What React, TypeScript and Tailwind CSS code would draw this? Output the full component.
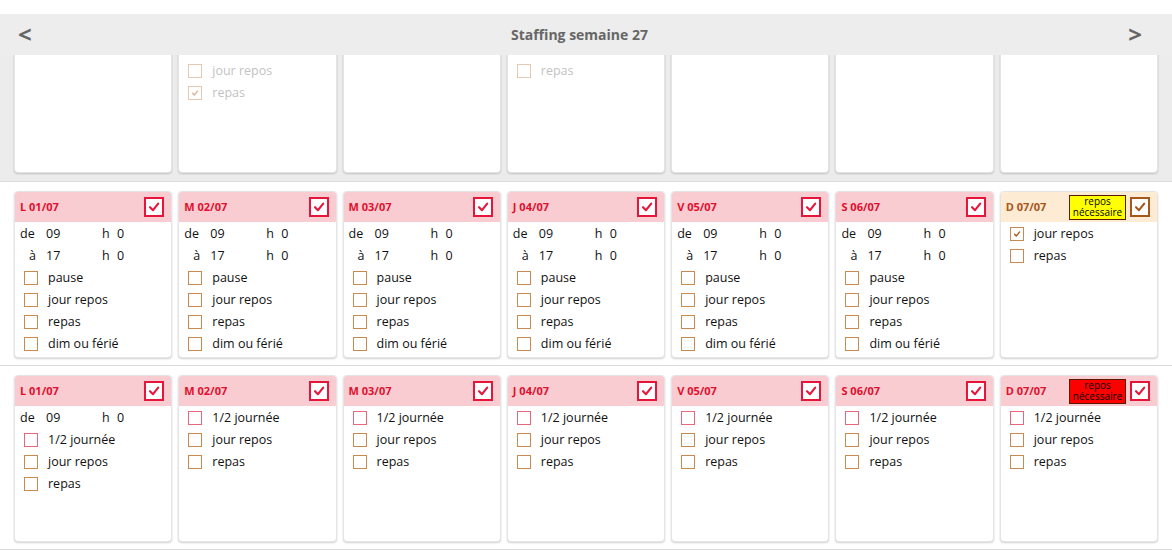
import React from "react";

type Item =
  | { kind: "time"; label: string; value: string; indent?: boolean }
  | { kind: "check"; label: string; checked?: boolean; pink?: boolean }
  | { kind: "spacer" };

type Card = {
  day: string;
  sunday?: "yellow" | "red";
  peach?: boolean;
  items: Item[];
};

const days = ["L 01/07", "M 02/07", "M 03/07", "J 04/07", "V 05/07", "S 06/07", "D 07/07"];

const timed: Item[] = [
  { kind: "time", label: "de", value: "09" },
  { kind: "time", label: "à", value: "17", indent: true },
  { kind: "check", label: "pause" },
  { kind: "check", label: "jour repos" },
  { kind: "check", label: "repas" },
  { kind: "check", label: "dim ou férié" },
];

const half: Item[] = [
  { kind: "check", label: "1/2 journée", pink: true },
  { kind: "check", label: "jour repos" },
  { kind: "check", label: "repas" },
];

const row1: Card[] = days.map((d, i) => ({
  day: d,
  items:
    i === 1
      ? [
          { kind: "spacer" },
          { kind: "check", label: "jour repos" },
          { kind: "check", label: "repas", checked: true },
        ]
      : i === 3
      ? [{ kind: "spacer" }, { kind: "check", label: "repas" }]
      : [],
}));

const row2: Card[] = days.map((d, i) =>
  i < 6
    ? { day: d, items: timed }
    : {
        day: d,
        sunday: "yellow",
        peach: true,
        items: [
          { kind: "check", label: "jour repos", checked: true },
          { kind: "check", label: "repas" },
        ],
      }
);

const row3: Card[] = days.map((d, i) =>
  i === 0
    ? { day: d, items: [{ kind: "time", label: "de", value: "09" }, ...half] }
    : i === 6
    ? { day: d, sunday: "red", items: half }
    : { day: d, items: half }
);

function BigCheck({ brown }: { brown?: boolean }) {
  const c = brown ? "#a8561b" : "#e5163a";
  return (
    <div
      className={`w-[20px] h-[20px] bg-white border-2 flex items-center justify-center ${
        brown ? "border-[#a8561b]" : "border-[#e5163a]"
      }`}
    >
      <svg width="14" height="14" viewBox="0 0 14 14">
        <path d="M3 7.2 L6 10.2 L11.2 3.6" fill="none" stroke={c} strokeWidth="2.1" strokeLinecap="round" strokeLinejoin="round" />
      </svg>
    </div>
  );
}

function SmallBox({ checked, pink }: { checked?: boolean; pink?: boolean }) {
  return (
    <div
      className={`w-[14px] h-[14px] bg-white border-[1.5px] flex items-center justify-center shrink-0 ${
        pink ? "border-[#e8677a]" : "border-[#c98a52]"
      }`}
    >
      {checked && (
        <svg width="10" height="10" viewBox="0 0 10 10">
          <path d="M2.6 5.3 L4.3 7 L7.6 2.9" fill="none" stroke="#a8561b" strokeWidth="1.3" strokeLinecap="round" strokeLinejoin="round" />
        </svg>
      )}
    </div>
  );
}

function DayCard({ card, faded }: { card: Card; faded?: boolean }) {
  return (
    <div className="h-[167px] bg-white rounded-[4px] border border-[#e4e4e4] shadow-[0_1px_2px_rgba(0,0,0,0.18)] overflow-hidden">
      <div
        className={`h-[30px] flex items-center justify-between pl-[5px] pr-[7px] ${
          card.peach ? "bg-[#fdebd3]" : "bg-[#f9ccd1]"
        }`}
      >
        <span
          className={`text-[11px] font-bold ${card.peach ? "text-[#a8561b]" : "text-[#e0102f]"}`}
        >
          {card.day}
        </span>
        <div className="flex items-center gap-[4px]">
          {card.sunday && (
            <div
              className={`w-[57px] h-[25px] border border-[#5a1a00] flex flex-col items-center justify-center text-[10px] leading-[11px] text-black ${
                card.sunday === "yellow" ? "bg-[#ffff00]" : "bg-[#ff0000]"
              }`}
            >
              <span>repos</span>
              <span>nécessaire</span>
            </div>
          )}
          <BigCheck brown={card.peach} />
        </div>
      </div>
      <div className={`pt-[1px] pl-[5px] text-[12.5px] text-[#111] ${faded ? "opacity-45" : ""}`}>
        {card.items.map((it, k) =>
          it.kind === "spacer" ? (
            <div key={k} className="h-[22px]" />
          ) : it.kind === "time" ? (
            <div key={k} className="h-[22px] flex items-center">
              <span className={`w-[26px] ${it.indent ? "pl-[9px]" : ""}`}>{it.label}</span>
              <span className="w-[56px]">{it.value}</span>
              <span className="w-[15px]">h</span>
              <span>0</span>
            </div>
          ) : (
            <div key={k} className="h-[22px] flex items-center pl-[4px]">
              <SmallBox checked={it.checked} pink={it.pink} />
              <span className={`ml-[10px] ${faded ? "text-[#777]" : ""}`}>{it.label}</span>
            </div>
          )
        )}
      </div>
    </div>
  );
}

function Row({ cards, faded }: { cards: Card[]; faded?: boolean }) {
  return (
    <div className="grid grid-cols-7 gap-[6px] px-[14px]">
      {cards.map((c, i) => (
        <DayCard key={i} card={c} faded={faded} />
      ))}
    </div>
  );
}

export default function App() {
  return (
    <div className="w-[1172px] h-[553px] overflow-hidden bg-white font-['Open_Sans',sans-serif]">
      <div className="h-[14px] bg-white" />
      <div className="h-[41px] bg-[#ededed] grid grid-cols-[1fr_auto_1fr] items-center">
        <span className="justify-self-start pl-[18px] text-[24px] font-bold text-[#666] leading-none pb-[2px]">&lt;</span>
        <span className="pr-[13px] text-[14px] font-bold text-[#666]">Staffing semaine 27</span>
        <span className="justify-self-end pr-[30px] text-[24px] font-bold text-[#666] leading-none pb-[2px]">&gt;</span>
      </div>
      <div className="h-[127px] overflow-hidden bg-[#ececec] border-b border-[#dcdcdc]">
        <div className="mt-[-49px]">
          <Row cards={row1} faded />
        </div>
      </div>
      <div className="pt-[9px] pb-[7px] border-b border-[#dcdcdc]">
        <Row cards={row2} />
      </div>
      <div className="pt-[9px] pb-[7px] border-b border-[#dcdcdc]">
        <Row cards={row3} />
      </div>
    </div>
  );
}
